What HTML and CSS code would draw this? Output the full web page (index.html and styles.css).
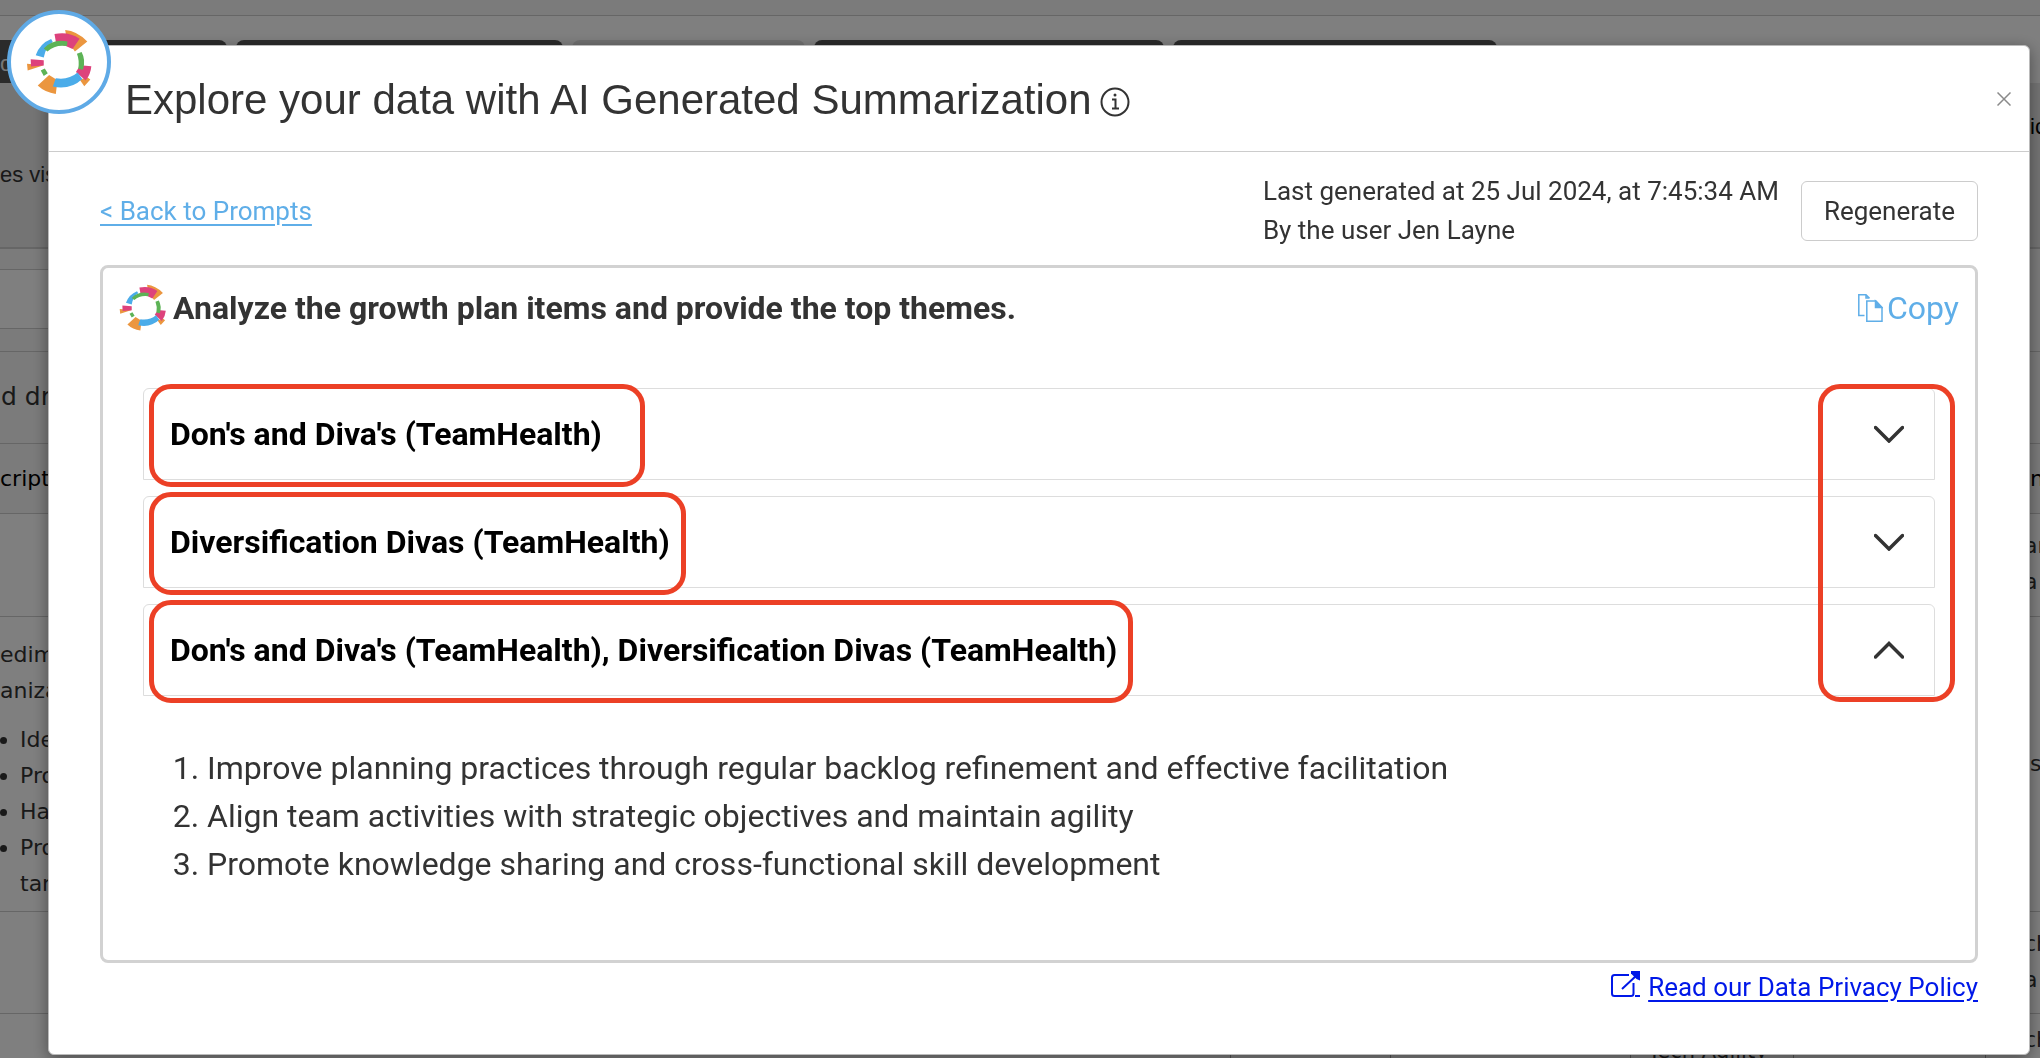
FILE: index.html
```
<!DOCTYPE html>
<html lang="en">
<head>
    <meta charset="UTF-8">
    <meta name="viewport" content="width=device-width, initial-scale=1.0">
    <title>AI Generated Summarization</title>
    <link rel="stylesheet" href="styles.css">
</head>
<body>

<svg class="defs" aria-hidden="true">
    <symbol id="logo" viewBox="78 87 200 200">
        <path fill="#eb963f" d="M195 90Q230 93 261 124L224 154L200 120ZM81 191L131 195L83 211ZM147 224L172 240L167 281Q135 277 113 256ZM238 238L262 232L270 238L252 258Z"/>
        <path fill="#dd427c" d="M163 102Q205 93 238 116L217 147Q195 135 168 130ZM92 177L131 180V196L93 199ZM240 195L273 198Q271 222 256 241L227 215Z"/>
        <path fill="#4bace9" d="M107 165Q120 130 153 117L158 126Q138 138 131 172ZM167 234Q205 240 232 217L246 236Q210 270 158 259Z"/>
        <path fill="#5db356" d="M131 145Q158 115 202 124L200 138Q165 133 142 154ZM122 211L134 205L143 219L131 227ZM230 161L244 156Q257 180 248 209L234 206Q238 180 230 161Z"/>
    </symbol>
</svg>

<div class="page">
    <div class="topbar"></div>
    <div class="tabs">
        <div class="tab tab-first">o</div>
        <div class="tab tab-second"></div>
        <div class="tab tab-third tab-active"></div>
        <div class="tab tab-fourth"></div>
        <div class="tab tab-fifth"></div>
    </div>
    <div class="band"><span>es vis</span><span class="edge inset dark">ic</span></div>
    <div class="filter"><div class="filter-box"></div></div>
    <div class="row row-title"><span>d dr</span></div>
    <div class="row row-head"><span>cript</span><span class="edge inset">n</span></div>
    <div class="row row-first"><span></span><span class="edge">ar<br>a</span></div>
    <div class="row row-long">
        <div>
            <div>edim<br>aniza</div>
            <ul>
                <li>Ide</li>
                <li>Pro</li>
                <li>Ha</li>
                <li>Pro<br>tar</li>
            </ul>
        </div>
        <span class="edge inset edge-s">s</span>
    </div>
    <div class="row row-next"><span></span><span class="edge">ch<br>a</span></div>
    <div class="row row-last">
        <span></span><span></span><span></span><span class="agility">Tech Agility</span><span></span><span class="ch">ch</span>
    </div>
</div>

<div class="overlay">
    <div class="modal" role="dialog" aria-labelledby="modal-title">
        <div class="badge"><svg width="67" height="67"><use href="#logo"/></svg></div>

        <div class="modal-header">
            <h1 id="modal-title">Explore your data with AI Generated Summarization</h1>
            <svg class="info" width="30" height="30" viewBox="0 0 30 30" fill="none" stroke="#333" stroke-width="2">
                <circle cx="15" cy="15" r="13.5"/>
                <path d="M12 12.5h3.5V21M12 21.5h7"/>
                <circle cx="15" cy="8" r="1.5" fill="#333" stroke="none"/>
            </svg>
            <button class="close" aria-label="Close">
                <svg width="14" height="14" viewBox="0 0 14 14" stroke="#8a8a8a" stroke-width="1.5"><path d="M.5 .5l13 13M13.5 .5l-13 13"/></svg>
            </button>
        </div>

        <div class="modal-body">
            <div class="toolbar">
                <a class="back" href="#">&lt; Back to Prompts</a>
                <div class="generated">Last generated at 25 Jul 2024, at 7:45:34 AM<br>By the user Jen Layne</div>
                <button class="regenerate">Regenerate</button>
            </div>

            <div class="panel">
                <div class="panel-head">
                    <svg width="48" height="48"><use href="#logo"/></svg>
                    <h2>Analyze the growth plan items and provide the top themes.</h2>
                    <button class="copy">
                        <svg width="25" height="28" viewBox="0 0 25 28" fill="none" stroke="#5faee8" stroke-width="1.5">
                            <path d="M6.500 21.500H.8V.8H8l3.500 3.500M8 .8V4h3.500"/>
                            <path d="M8.800 7H18l6 6.500v13.700H8.800Z"/>
                            <path fill="#5faee8" d="M17.500 7v6.500H24Z"/>
                        </svg>Copy</button>
                </div>

                <div class="accordion">
                    <button class="item" aria-expanded="false">
                        <span class="team team-wide">Don's and Diva's (TeamHealth)</span>
                        <svg class="chevron" width="30" height="18" viewBox="0 0 30 18"><path d="M1.500 2.500L15 16L28.500 2.500"/></svg>
                    </button>
                    <button class="item" aria-expanded="false">
                        <span class="team">Diversification Divas (TeamHealth)</span>
                        <svg class="chevron" width="30" height="18" viewBox="0 0 30 18"><path d="M1.500 2.500L15 16L28.500 2.500"/></svg>
                    </button>
                    <button class="item" aria-expanded="true">
                        <span class="team">Don's and Diva's (TeamHealth), Diversification Divas (TeamHealth)</span>
                        <svg class="chevron" width="30" height="18" viewBox="0 0 30 18"><path d="M1.500 16L15 2.500L28.500 16"/></svg>
                    </button>
                    <div class="arrows-mark"></div>
                </div>

                <ol class="themes">
                    <li>Improve planning practices through regular backlog refinement and effective facilitation</li>
                    <li>Align team activities with strategic objectives and maintain agility</li>
                    <li>Promote knowledge sharing and cross-functional skill development</li>
                </ol>
            </div>

            <a class="privacy" href="#">
                <svg width="30" height="26" viewBox="0 0 30 26" fill="none" stroke="#0018e8" stroke-width="2">
                    <path d="M18 4H3.500Q1 4 1 6.500V22.500Q1 25 3.500 25H20Q22.500 25 22.500 22.500V12M11 18L26 4M24 25H29"/>
                    <path fill="#0018e8" stroke="none" d="M20 0H29V9.500L25.500 8L20 2.500Z"/>
                </svg>
                <span>Read our Data Privacy Policy</span>
            </a>
        </div>
    </div>
</div>

</body>
</html>
```
FILE: styles.css
```
* {
    box-sizing: border-box;
}
body {
    margin: 0;
    font-family: Roboto, "Liberation Sans", sans-serif;
    color: #333;
}
button {
    font-family: inherit;
    color: inherit;
    cursor: pointer;
}
svg {
    flex-shrink: 0;
}
.defs {
    display: none;
}

/* page behind the dialog */
.page {
    position: fixed;
    inset: 0;
    overflow: hidden;
    background: #fff;
    font-family: "DejaVu Sans", sans-serif;
    font-size: 22px;
    line-height: 36px;
}
.topbar {
    height: 16px;
    background: #f6f6f6;
    border-bottom: 1px solid #ccc;
}
.tabs {
    display: flex;
    gap: 9px;
    height: 67px;
    padding-top: 24px;
}
.tab {
    background: #565656;
    border-radius: 8px 8px 0 0;
    color: #eee;
    font-family: "Liberation Sans", sans-serif;
    line-height: 48px;
}
.tab-first {
    width: 227px;
    border-radius: 0 8px 0 0;
}
.tab-second {
    width: 327px;
}
.tab-third {
    width: 233px;
}
.tab-fourth {
    width: 350px;
}
.tab-fifth {
    width: 324px;
}
.tab-active {
    background: #e0e0e0;
}
.band {
    display: flex;
    justify-content: space-between;
    height: 166px;
    padding-top: 74px;
    background: #e8e8e8;
    border-bottom: 2px solid #ccc;
    font-family: "Liberation Sans", sans-serif;
}
.dark {
    margin-top: -48px;
    color: #000;
}
.edge {
    width: 16px;
}
.inset {
    padding-left: 6px;
}
.filter {
    height: 103px;
    padding: 20px 0 22px;
    background: #f6f6f6;
    border-bottom: 1px solid #ccc;
}
.filter-box {
    width: 60px;
    height: 60px;
    background: #fff;
    border: 1px solid #ccc;
    border-left: 0;
}
.row {
    display: flex;
    justify-content: space-between;
    border-bottom: 1px solid #ccc;
}
.row-title {
    height: 92px;
    padding: 27px 1px;
    background: #f6f6f6;
    font-size: 25px;
}
.row-head {
    height: 70px;
    padding-top: 17px;
    background: #f6f6f6;
    color: #000;
}
.row-first {
    height: 103px;
    padding-top: 14px;
}
.row-long {
    height: 295px;
    padding-top: 20px;
}
.row-long ul {
    margin: 13px 0 0;
    padding-left: 20px;
}
.edge-s {
    margin-top: 109px;
}
.row-next {
    height: 102px;
    padding-top: 14px;
}
.row-last {
    display: grid;
    grid-template-columns: 1231px 160px 240px 163px 192px 1fr;
}
.row-last span {
    height: 60px;
    border-right: 1px solid #aaa;
}
.row-last .agility {
    padding: 19px 0 0 17px;
    font-size: 21px;
}
.row-last .ch {
    padding: 8px 0 0 38px;
    border: 0;
}

/* dialog */
.overlay {
    position: relative;
    min-height: 100vh;
    padding: 45px 10px 4px 48px;
    background: rgba(0, 0, 0, 0.5);
}
.modal {
    position: relative;
    background: #fff;
    border: 1px solid #bbb;
    border-radius: 6px;
    box-shadow: 0 4px 16px rgba(0, 0, 0, 0.4);
}
.badge {
    position: absolute;
    top: -36px;
    left: -42px;
    display: flex;
    align-items: center;
    justify-content: center;
    width: 104px;
    height: 104px;
    background: #fff;
    border: 4px solid #5faae6;
    border-radius: 50%;
}
.modal-header {
    display: flex;
    align-items: center;
    height: 106px;
    padding: 0 18px 0 76px;
    border-bottom: 1px solid #ccc;
}
.modal-header h1 {
    margin: 2px 0 0;
    font-family: "Liberation Sans", sans-serif;
    font-size: 42px;
    font-weight: 400;
}
.info {
    margin: 6px 0 0 8px;
}
.close {
    display: flex;
    margin-left: auto;
    padding: 0;
    background: none;
    border: 0;
}
.modal-body {
    padding: 20px 51px 51px;
}
.toolbar {
    display: flex;
    align-items: center;
    height: 78px;
    font-size: 26px;
}
.back {
    margin-right: auto;
    color: #5faee8;
    text-underline-offset: 4px;
}
.generated {
    line-height: 39px;
}
.regenerate {
    height: 60px;
    margin-left: 22px;
    padding: 0 22px;
    background: #fff;
    border: 1px solid #ccc;
    border-radius: 6px;
    font-size: 26px;
}
.panel {
    margin-top: 15px;
    padding: 16px 16px 72px;
    border: 3px solid #d2d2d2;
    border-radius: 8px;
    font-size: 32px;
}
.panel-head {
    display: flex;
    align-items: center;
    height: 48px;
}
.panel-head h2 {
    margin: 0 auto 0 6px;
    font-size: 32px;
    font-weight: 700;
}
.copy {
    display: flex;
    align-items: center;
    gap: 4px;
    padding: 0;
    background: none;
    border: 0;
    color: #5faee8;
    font-size: 32px;
}
.accordion {
    position: relative;
    display: flex;
    flex-direction: column;
    gap: 16px;
    margin: 56px 24px 0;
}
.item {
    display: flex;
    align-items: center;
    justify-content: space-between;
    height: 92px;
    padding: 0 30px 0 26px;
    background: #fff;
    border: 1px solid #ddd;
    border-radius: 6px 6px 0 0;
    color: #000;
    font-size: 32px;
    font-weight: 700;
}
.team {
    position: relative;
    line-height: 90px;
}
.team::after {
    content: "";
    position: absolute;
    inset: -5px -16px -8px -21px;
    border: 5px solid #ec4026;
    border-radius: 22px;
}
.team-wide::after {
    right: -43px;
}
.arrows-mark {
    position: absolute;
    top: -4px;
    right: -20px;
    bottom: -6px;
    width: 137px;
    border: 5px solid #ec4026;
    border-radius: 22px;
}
.chevron {
    fill: none;
    stroke: #333;
    stroke-width: 3.5;
    stroke-linecap: round;
}
.themes {
    margin: 48px 0 0;
    padding-left: 88px;
    line-height: 48px;
}
.privacy {
    display: flex;
    justify-content: flex-end;
    gap: 7px;
    margin-top: 8px;
    color: #0018e8;
    font-size: 26px;
    line-height: 32px;
    text-decoration: none;
}
.privacy span {
    text-decoration: underline;
    text-underline-offset: 4px;
}
```
